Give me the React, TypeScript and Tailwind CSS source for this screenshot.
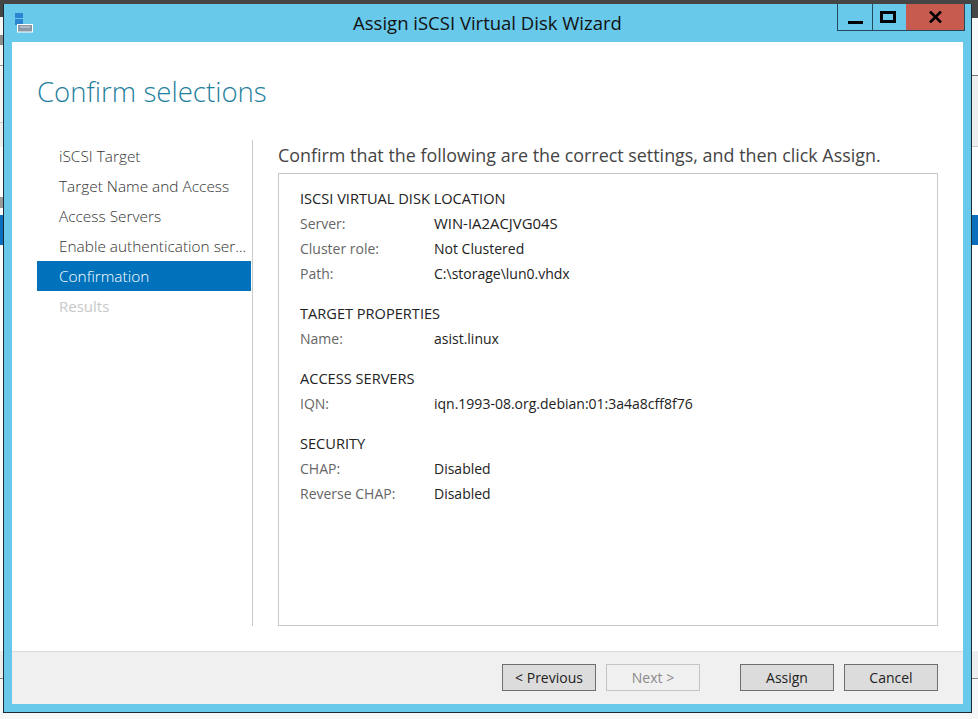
const font = "font-['Open_Sans','Noto_Sans',sans-serif]";

function Row({ label, value, wide }: { label: string; value: string; wide?: boolean }) {
  return (
    <div className="flex h-[25px] items-center">
      <span className="w-[134px] text-[#666]">{label}</span>
      <span className={wide ? "text-[14.9px] text-[#222]" : "text-[#222]"}>{value}</span>
    </div>
  );
}

function Section({ title, children }: { title: string; children: React.ReactNode }) {
  return (
    <div className="mb-[15px]">
      <div className="flex h-[25px] items-center text-[14.6px] text-[#222]">{title}</div>
      {children}
    </div>
  );
}

function Btn({ children, disabled }: { children: React.ReactNode; disabled?: boolean }) {
  return (
    <div
      className={
        disabled
          ? "flex h-[27px] w-[94px] items-center justify-center border border-[#c4c4c4] bg-[#f0f0f0] text-[#8a8a8a]"
          : "flex h-[27px] w-[94px] items-center justify-center border border-[#6e6e6e] bg-[#dcdcdc] text-[#222]"
      }
    >
      {children}
    </div>
  );
}

function LeftStrip() {
  return (
    <div className="flex w-[3px] shrink-0 flex-col">
      <div className="h-[17px] bg-[#454545]" />
      <div className="h-[18px] bg-[#f8f8f8]" />
      <div className="h-[10px] bg-[#8c8c8c]" />
      <div className="h-[20px] bg-[#f7f7f7]" />
      <div className="h-px bg-[#999999]" />
      <div className="h-[56px] bg-[#f5f5f5]" />
      <div className="h-px bg-[#cccccc]" />
      <div className="h-[24px] bg-[#efefef]" />
      <div className="h-[50px] bg-white" />
      <div className="h-[11px] bg-[#999999]" />
      <div className="h-[7px] bg-white" />
      <div className="h-[30px] bg-[#0a6ebd]" />
      <div className="h-[406px] bg-white" />
      <div className="h-[27px] bg-[#eeeeee]" />
      <div className="h-px bg-[#888888]" />
      <div className="flex-1 bg-[#f7f7f7]" />
    </div>
  );
}

function RightStrip() {
  return (
    <div className="flex w-[6px] shrink-0 flex-col">
      <div className="h-[18px] bg-[#454545]" />
      <div className="h-[57px] bg-[#f8f8f8]" />
      <div className="h-px bg-[#777777]" />
      <div className="h-[70px] bg-[#eeeeee]" />
      <div className="h-px bg-[#cccccc]" />
      <div className="h-[68px] bg-white" />
      <div className="h-[30px] bg-[#0a6ebd]" />
      <div className="h-[406px] bg-white" />
      <div className="h-[27px] bg-[#eeeeee]" />
      <div className="h-px bg-[#888888]" />
      <div className="flex-1 bg-[#f7f7f7]" />
    </div>
  );
}

export default function App() {
  const steps = ["iSCSI Target", "Target Name and Access", "Access Servers", "Enable authentication ser..."];
  return (
    <div className={`${font} flex h-[719px] w-[978px] overflow-hidden bg-[#f7f7f7] text-[14px]`}>
      <LeftStrip />
      <div className="flex w-[969px] shrink-0 flex-col">
        <div className="h-[4px] shrink-0 bg-[#454545]" />
        <div className="flex h-[709px] shrink-0 flex-col border-x border-b border-[#1c2b36] bg-[#69c9ea] px-[8px] pb-[8px]">
          <div className="relative flex h-[38px] shrink-0 items-center justify-center text-[18.5px] text-[#111]">
            <span>Assign iSCSI Virtual Disk Wizard</span>
            <svg className="absolute left-[2px] top-[8px]" width="24" height="24" viewBox="0 0 24 24">
              <rect x="1" y="1" width="8" height="5" fill="#2a86d0" />
              <rect x="1" y="7" width="8" height="6" fill="#2a86d0" />
              <rect x="3.5" y="12.5" width="15" height="7.5" fill="#8a98a8" stroke="#fff" />
              <rect x="6" y="14.5" width="10" height="1" fill="#d5dce2" />
            </svg>
            <div className="absolute right-[-2px] top-0 flex h-[27px] items-stretch border-x border-b border-[#24495c]">
              <div className="flex w-[35px] items-end justify-center border-r border-[#24495c] pb-[6px]">
                <div className="h-[3px] w-[15px] bg-black" />
              </div>
              <div className="flex w-[33px] items-center justify-center pr-[3px]">
                <div className="h-[12px] w-[16px] border-[3px] border-black" />
              </div>
              <div className="flex w-[58px] items-center justify-center bg-[#c75b50]">
                <svg width="13" height="12" viewBox="0 0 13 12"><path d="M1 0.5 12 11.5M12 0.5 1 11.5" stroke="#000" strokeWidth="2.6" /></svg>
              </div>
            </div>
          </div>
          <div className="flex min-h-0 flex-1 flex-col bg-white">
            <h1 className="h-[98px] shrink-0 pl-[25px] pt-[29px] text-[27.6px] font-light leading-[40px] text-[#1f7f9e]">Confirm selections</h1>
            <div className="flex min-h-0 flex-1 pb-[25px] pl-[25px] pr-[25px]">
              <div className="w-[216px] shrink-0 border-r border-[#c8c8c8] pt-[1px] text-[15.4px]">
                {steps.map((s) => (
                  <div key={s} className="flex h-[30px] w-[214px] items-center overflow-hidden whitespace-nowrap pl-[22px] pt-[2px] font-light text-[#333]">{s}</div>
                ))}
                <div className="flex h-[30px] w-[214px] items-center bg-[#0072bc] pl-[22px] pt-[2px] font-light text-white">Confirmation</div>
                <div className="flex h-[30px] w-[214px] items-center pl-[22px] pt-[1px] text-[15px] text-[#c8c8c8]">Results</div>
              </div>
              <div className="flex min-w-0 flex-1 flex-col pl-[25px]">
                <div className="h-[33px] pt-[1px] text-[17.9px] leading-[28px] text-[#444]">Confirm that the following are the correct settings, and then click Assign.</div>
                <div className="flex-1 border border-[#c8c8c8] pl-[21px] pt-[12px]">
                  <Section title="ISCSI VIRTUAL DISK LOCATION">
                    <Row label="Server:" value="WIN-IA2ACJVG04S" wide />
                    <Row label="Cluster role:" value="Not Clustered" />
                    <Row label="Path:" value="C:\storage\lun0.vhdx" />
                  </Section>
                  <Section title="TARGET PROPERTIES">
                    <Row label="Name:" value="asist.linux" />
                  </Section>
                  <Section title="ACCESS SERVERS">
                    <Row label="IQN:" value="iqn.1993-08.org.debian:01:3a4a8cff8f76" />
                  </Section>
                  <Section title="SECURITY">
                    <Row label="CHAP:" value="Disabled" />
                    <Row label="Reverse CHAP:" value="Disabled" />
                  </Section>
                </div>
              </div>
            </div>
            <div className="flex h-[53px] shrink-0 items-start border-t border-[#dcdcdc] bg-[#f0f0f0] pr-[25px] pt-[12px]">
              <div className="ml-auto flex gap-[10px]">
                <Btn>&lt; Previous</Btn>
                <Btn disabled>Next &gt;</Btn>
              </div>
              <div className="ml-[40px] flex gap-[10px]">
                <Btn>Assign</Btn>
                <Btn>Cancel</Btn>
              </div>
            </div>
          </div>
        </div>
      </div>
      <RightStrip />
    </div>
  );
}
